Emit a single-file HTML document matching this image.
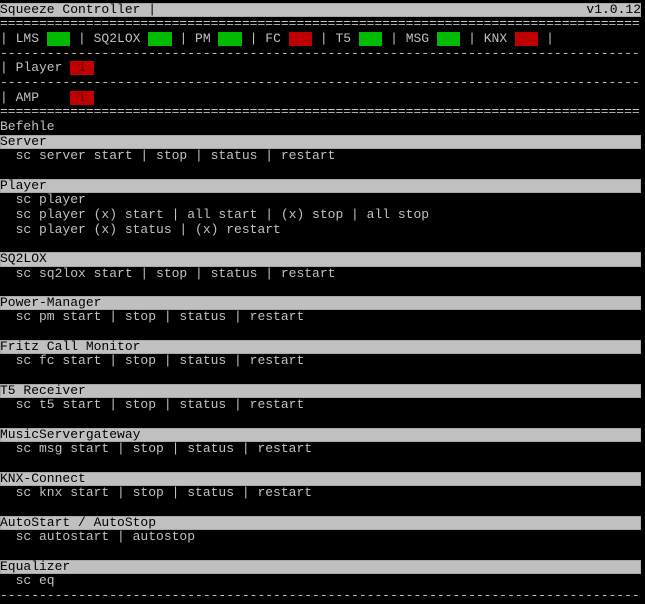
<!DOCTYPE html>
<html><head><meta charset="utf-8"><style>
html,body{margin:0;padding:0;background:#000;width:645px;height:602px;overflow:hidden}
#t{position:absolute;left:0;top:2.7px;width:641px;font-family:"Liberation Mono",monospace;font-size:13px;color:#c0c0c0}
.l{height:14.667px;line-height:14.667px;overflow:hidden;white-space:pre}
.b{background:#c0c0c0;color:#000;box-shadow:inset 0 0 0 1px #a8a8a8}
.g{background:#00bb00;color:#00bb00}
.r{background:#c00000;color:#c00000}
.n{background:#c00000;color:#700000}
.v{float:right}
</style></head><body><div id="t"><div class="l b">Squeeze Controller |<span class="v">v1.0.12</span></div><div class="l">==================================================================================</div><div class="l">| LMS <span class="g">   </span> | SQ2LOX <span class="g">   </span> | PM <span class="g">   </span> | FC <span class="r">   </span> | T5 <span class="g">   </span> | MSG <span class="g">   </span> | KNX <span class="r">   </span> |</div><div class="l">----------------------------------------------------------------------------------</div><div class="l">| Player <span class="n"> 1 </span></div><div class="l">----------------------------------------------------------------------------------</div><div class="l">| AMP    <span class="n"> 1 </span></div><div class="l">==================================================================================</div><div class="l">Befehle</div><div class="l b">Server</div><div class="l">  sc server start | stop | status | restart</div><div class="l"> </div><div class="l b">Player</div><div class="l">  sc player</div><div class="l">  sc player (x) start | all start | (x) stop | all stop</div><div class="l">  sc player (x) status | (x) restart</div><div class="l"> </div><div class="l b">SQ2LOX</div><div class="l">  sc sq2lox start | stop | status | restart</div><div class="l"> </div><div class="l b">Power-Manager</div><div class="l">  sc pm start | stop | status | restart</div><div class="l"> </div><div class="l b">Fritz Call Monitor</div><div class="l">  sc fc start | stop | status | restart</div><div class="l"> </div><div class="l b">T5 Receiver</div><div class="l">  sc t5 start | stop | status | restart</div><div class="l"> </div><div class="l b">MusicServergateway</div><div class="l">  sc msg start | stop | status | restart</div><div class="l"> </div><div class="l b">KNX-Connect</div><div class="l">  sc knx start | stop | status | restart</div><div class="l"> </div><div class="l b">AutoStart / AutoStop</div><div class="l">  sc autostart | autostop</div><div class="l"> </div><div class="l b">Equalizer</div><div class="l">  sc eq</div><div class="l">----------------------------------------------------------------------------------</div></div></body></html>
